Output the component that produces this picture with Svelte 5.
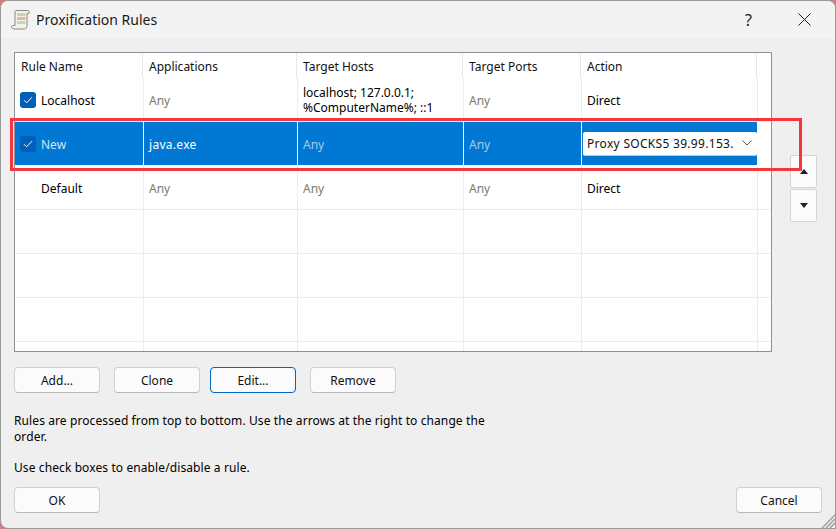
<script>
  // Proxification Rules dialog
  const rules = [
    { name: 'Localhost', check: true, apps: 'Any', hosts: 'localhost; 127.0.0.1;\n%ComputerName%; ::1', ports: 'Any', action: 'Direct' },
    { name: 'New', check: true, selected: true, apps: 'java.exe', hosts: 'Any', ports: 'Any', action: 'Proxy SOCKS5 39.99.153.' },
    { name: 'Default', apps: 'Any', hosts: 'Any', ports: 'Any', action: 'Direct' },
    {}, {}, {}, {}
  ];
  const columns = ['Rule Name', 'Applications', 'Target Hosts', 'Target Ports', 'Action'];
</script>

<div class="window">
  <header class="titlebar">
    <svg class="app-icon" width="20" height="22" viewBox="0 0 20 22" aria-hidden="true">
      <path d="M5 1.5h12.5c1 0 1 3 0 3H16v12c0 2-1 3.500-2.500 3.500H3c-1.500 0-2.500-1-2.500-2.500 0-.6.400-1 1-1H4V3c0-1 .4-1.500 1-1.500z" fill="#f4f1e6" stroke="#8a8a8a" stroke-width="1"/>
      <rect x="6" y="4" width="8.500" height="3" fill="#b9dcb4"/>
      <rect x="6" y="8" width="8.500" height="3" fill="#eeb0a8"/>
      <rect x="6" y="12" width="8.500" height="3" fill="#b9dcb4"/>
    </svg>
    <span class="title">Proxification Rules</span>
    <span class="help">?</span>
    <svg class="close" width="13" height="13" viewBox="0 0 13 13" aria-hidden="true">
      <path d="M.5.5l12 12M12.500.5l-12 12" stroke="#222" stroke-width="1" fill="none"/>
    </svg>
  </header>

  <main class="content">
    <div class="table-row">
      <div class="table">
        <div class="head">
          {#each columns as col}<div class="th">{col}</div>{/each}
          <div class="th"></div>
        </div>
        {#each rules as r}
          <div class="row" class:selected={r.selected}>
            <div class="td name">
              {#if r.name}
                <span class="check-slot">
                  {#if r.check}
                    <span class="check">
                      <svg width="10" height="8" viewBox="0 0 10 8" aria-hidden="true"><path d="M1 4.200l2.600 2.600L9 1.200" stroke="#fff" stroke-width="1" fill="none"/></svg>
                    </span>
                  {/if}
                </span>
                {r.name}
              {/if}
            </div>
            <div class="td" class:any={r.apps === 'Any'}>{r.apps ?? ''}</div>
            <div class="td hosts" class:any={r.hosts === 'Any'}>{r.hosts ?? ''}</div>
            <div class="td" class:any={r.ports === 'Any'}>{r.ports ?? ''}</div>
            <div class="td action">
              {#if r.selected}
                <div class="combo">
                  <span>{r.action}</span>
                  <svg width="10" height="6" viewBox="0 0 10 6" aria-hidden="true"><path d="M.5.5L5 5 9.500.5" stroke="#555" stroke-width="1" fill="none"/></svg>
                </div>
              {:else}
                {r.action ?? ''}
              {/if}
            </div>
            <div class="td last"></div>
          </div>
        {/each}
      </div>

      <div class="movers">
        <button class="mover" aria-label="Move up"><svg width="8" height="5" viewBox="0 0 8 5" aria-hidden="true"><path d="M4 0l4 5H0z" fill="#222"/></svg></button>
        <button class="mover" aria-label="Move down"><svg width="8" height="5" viewBox="0 0 8 5" aria-hidden="true"><path d="M0 0h8L4 5z" fill="#222"/></svg></button>
      </div>
    </div>

    <div class="actions">
      <button class="btn">Add...</button>
      <button class="btn">Clone</button>
      <button class="btn focus">Edit...</button>
      <button class="btn">Remove</button>
    </div>

    <p class="note">Rules are processed from top to bottom. Use the arrows at the right to change the order.</p>
    <p class="note second">Use check boxes to enable/disable a rule.</p>

    <div class="footer">
      <button class="btn">OK</button>
      <button class="btn">Cancel</button>
    </div>
  </main>

  <svg class="grip" width="14" height="14" viewBox="0 0 14 14" aria-hidden="true">
    <path d="M14 1L1 14M14 5L5 14M14 9L9 14" stroke="#a0a0a0" stroke-width="1.500" fill="none"/>
  </svg>
  <div class="highlight"></div>
</div>

<style>
  :global(body) {
    margin: 0;
    background: #c9807f;
  }
  .window {
    position: relative;
    width: 836px;
    height: 529px;
    box-sizing: border-box;
    overflow: hidden;
    border: 1px solid #9a9a9a;
    border-radius: 8px 8px 0 8px;
    background: #efefef;
    color: #000;
    font-family: "Noto Sans", "Open Sans", sans-serif;
    font-size: 12px;
  }
  .titlebar {
    display: flex;
    align-items: center;
    height: 37px;
    padding: 0 24px 0 10px;
    background: #f3f3f3;
  }
  .app-icon { margin-right: 5px; }
  .title { font-size: 14px; color: #1a1a1a; flex: 1; }
  .help { font-size: 16px; margin-right: 46px; color: #222; }

  .content { padding: 14px 13px 0; }
  .table-row { display: flex; align-items: flex-start; }
  .table {
    box-sizing: border-box;
    width: 758px;
    height: 300px;
    overflow: hidden;
    background: #fff;
    border: 1px solid #8f8f9a;
  }
  .head, .row { display: grid; }
  .head {
    grid-template-columns: 128px 154px 166px 118px 176px 14px;
    height: 25px;
  }
  .row { grid-template-columns: 129px 154px 166px 118px 176px 13px; }
  .th {
    display: flex;
    align-items: center;
    padding: 2px 0 0 6px;
    border-right: 1px solid #e8e8e8;
    color: #111;
  }
  .th:last-child { border-right: 0; }
  .row {
    box-sizing: border-box;
    height: 44px;
    border-bottom: 1px solid #ececec;
  }
  .td {
    display: flex;
    align-items: center;
    box-sizing: border-box;
    padding: 1px 0 0 5px;
    border-right: 1px solid #ececec;
    line-height: 15px;
    white-space: pre-line;
  }
  .td.last { border-right: 0; }
  .any { color: #7b7b6b; }
  .check-slot { display: inline-block; width: 20px; margin-right: 1px; flex: none; }
  .name { padding-left: 5px; white-space: nowrap; }
  .check {
    display: flex;
    align-items: center;
    justify-content: center;
    width: 16px;
    height: 16px;
    border-radius: 3px;
    background: #005fb8;
  }
  .selected { background: #0078d4; border-bottom-color: #fff; }
  .selected .td { color: #fff; border-right-color: #fff; letter-spacing: .3px; }
  .selected .td.name { letter-spacing: 0; color: #cfe4f5; }
  .selected .td.any { color: #a8cce8; letter-spacing: 0; }
  .selected .td.last { background: #fff; }
  .selected .action { padding: 0 0 0 1px; }
  .combo {
    display: flex;
    align-items: center;
    justify-content: space-between;
    box-sizing: border-box;
    width: 174px;
    height: 24px;
    padding: 0 5px 0 4px;
    background: #fff;
    border-bottom: 1px solid #c8c8c8;
    border-radius: 2px;
    color: #111;
    white-space: nowrap;
  }

  .movers { display: flex; flex-direction: column; gap: 1px; margin: 103px 0 0 18px; }
  .mover {
    display: flex;
    align-items: center;
    justify-content: center;
    width: 27px;
    height: 33px;
    padding: 0;
    background: #fbfbfb;
    border: 1px solid #d4d4d4;
    border-radius: 2px;
  }

  .actions { display: flex; gap: 14px; margin-top: 15px; }
  .actions .btn:nth-child(3) { margin-left: -4px; }
  .btn {
    box-sizing: border-box;
    width: 86px;
    height: 26px;
    padding: 0;
    font: inherit;
    color: #111;
    background: #fbfbfb;
    border: 1px solid #d0d0d0;
    border-bottom-color: #b8b8b8;
    border-radius: 4px;
  }
  .btn.focus { border-color: #0067c0; }
  .note { margin: 20px 0 0; width: 490px; line-height: 16px; letter-spacing: .1px; }
  .second { margin-top: 15px; }
  .footer { display: flex; justify-content: space-between; width: 808px; margin-top: 11px; }

  .grip { position: absolute; right: 0; bottom: 0; }
  .highlight {
    position: absolute;
    left: 9px;
    top: 117px;
    width: 792px;
    height: 53px;
    box-sizing: border-box;
    border: 3px solid #f2383c;
    pointer-events: none;
  }
</style>
